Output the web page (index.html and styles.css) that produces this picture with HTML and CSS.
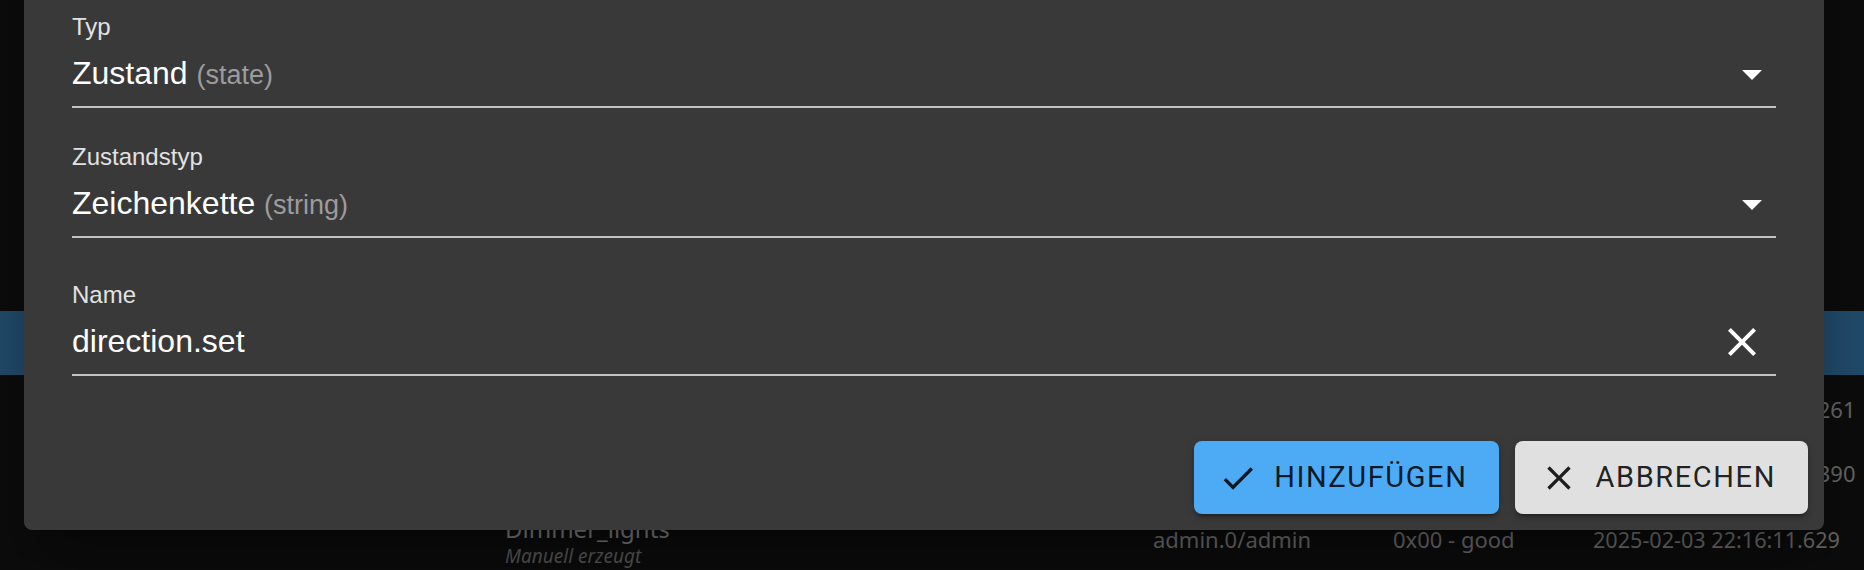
FILE: index.html
```html
<!DOCTYPE html>
<html>
<head>
    <meta charset="utf-8">
    <title>Objekte</title>
    <link rel="stylesheet" href="styles.css">
</head>
<body>
<div class="page">
    <div class="toolbar"></div>
    <div class="row row-selected"></div>
    <div class="row">
        <div class="cell cell-ts">2025-02-03 22:16:11.261</div>
    </div>
    <div class="row">
        <div class="cell cell-ts">2025-02-03 22:16:11.390</div>
    </div>
    <div class="row row-obj">
        <div class="cell cell-name">
            <div class="obj-name">Dimmer_lights</div>
            <div class="obj-desc">Manuell erzeugt</div>
        </div>
        <div class="cell cell-from">admin.0/admin</div>
        <div class="cell cell-q">0x00 - good</div>
        <div class="cell cell-ts">2025-02-03 22:16:11.629</div>
    </div>
</div>

<div class="dialog">
    <form class="dialog-content">
        <div class="field">
            <label class="field-label">Typ</label>
            <div class="field-input">
                <span class="field-value">Zustand <span class="hint">(state)</span></span>
                <svg class="icon" viewBox="0 0 24 24"><path d="M7 10l5 5 5-5z"/></svg>
            </div>
        </div>
        <div class="field">
            <label class="field-label">Zustandstyp</label>
            <div class="field-input">
                <span class="field-value">Zeichenkette <span class="hint">(string)</span></span>
                <svg class="icon" viewBox="0 0 24 24"><path d="M7 10l5 5 5-5z"/></svg>
            </div>
        </div>
        <div class="field field-text">
            <label class="field-label" for="name">Name</label>
            <div class="field-input">
                <input class="field-value" id="name" value="direction.set">
                <svg class="icon icon-clear" viewBox="0 0 24 24"><path d="M19 6.41 17.59 5 12 10.59 6.41 5 5 6.41 10.59 12 5 17.59 6.41 19 12 13.41 17.59 19 19 17.59 13.41 12z"/></svg>
            </div>
        </div>
    </form>
    <div class="dialog-actions">
        <button class="btn btn-primary" type="button">
            <svg viewBox="0 0 24 24"><path d="M9 16.17 4.83 12l-1.42 1.41L9 19 21 7l-1.41-1.41z"/></svg>
            Hinzufügen
        </button>
        <button class="btn btn-grey" type="button">
            <svg viewBox="0 0 24 24"><path d="M19 6.41 17.59 5 12 10.59 6.41 5 5 6.41 10.59 12 5 17.59 6.41 19 12 13.41 17.59 19 19 17.59 13.41 12z"/></svg>
            Abbrechen
        </button>
    </div>
</div>
</body>
</html>
```

FILE: styles.css
```css
body {
    margin: 0;
    height: 570px;
    overflow: hidden;
    background: #0d0d0d;
    font-family: "Noto Sans", sans-serif;
}

.page {
    position: relative;
}

.toolbar {
    height: 311px;
}

.row {
    display: grid;
    grid-template-columns: 505px 648px 240px 200px auto;
    align-items: center;
    min-height: 64px;
    font-size: 22px;
    color: #6b6b6b;
}

.row-selected {
    background: #234e6f;
}

.row .cell-ts {
    grid-column: 5;
    padding: 4px 0 0 11px;
}

/* two line name cell makes this row a bit taller */
.row-obj .cell-ts {
    padding: 0;
    font-size: 21.6px;
}

.cell-name {
    grid-column: 2;
    padding: 12px 0 6px;
}

.obj-name {
    font-size: 24px;
    line-height: 28px;
    color: #777;
}

.obj-desc {
    font-size: 19px;
    line-height: 26px;
    font-style: italic;
    color: #565656;
}

/* dialog */
.dialog {
    position: absolute;
    left: 24px;
    top: -40px;
    width: 1800px;
    background: #393939;
    border-radius: 8px;
    box-shadow: 0 22px 30px -14px rgba(0, 0, 0, 0.2),
                0 48px 76px 6px rgba(0, 0, 0, 0.14),
                0 18px 92px 16px rgba(0, 0, 0, 0.12);
    font-family: "Liberation Sans", Arial, sans-serif;
}

.dialog-content {
    margin: 0;
    padding: 55px 48px 49px;
}

.field + .field {
    margin-top: 37px;
}

.field.field-text {
    margin-top: 45px;
}

.field-label {
    display: block;
    font-size: 24px;
    line-height: 24px;
    color: #e2e2e2;
}

.field-input {
    display: flex;
    align-items: center;
    margin-top: 3px;
    border-bottom: 2px solid #c4c4c4;
}

.field-value {
    flex: 1;
    min-width: 0;
    height: 46px;
    padding: 8px 0 10px;
    font-size: 32px;
    line-height: 46px;
    color: #fff;
}

input.field-value {
    border: 0;
    outline: none;
    background: transparent;
    font-family: inherit;
}

.hint {
    font-size: 27px;
    line-height: 1;
    color: #9c9c9c;
}

.icon {
    width: 48px;
    height: 48px;
    fill: #fff;
    flex: none;
}

.icon-clear {
    margin-right: 10px;
}

.dialog-actions {
    display: flex;
    justify-content: flex-end;
    gap: 16px;
    padding: 16px;
}

.btn {
    display: inline-flex;
    align-items: center;
    padding: 12px 32px;
    border: 0;
    border-radius: 8px;
    font-family: Roboto, sans-serif;
    font-size: 29px;
    line-height: 49px;
    font-weight: 400;
    letter-spacing: 1.6px;
    text-transform: uppercase;
    color: rgba(0, 0, 0, 0.87);
    box-shadow: 0 6px 2px -4px rgba(0, 0, 0, 0.2),
                0 4px 4px 0 rgba(0, 0, 0, 0.14),
                0 2px 10px 0 rgba(0, 0, 0, 0.12);
}

.btn svg {
    width: 40px;
    height: 40px;
    margin-left: -8px;
    margin-right: 16px;
    fill: currentColor;
}

.btn-primary {
    background: #4dabf5;
}

.btn-grey {
    background: #e0e0e0;
}
```
